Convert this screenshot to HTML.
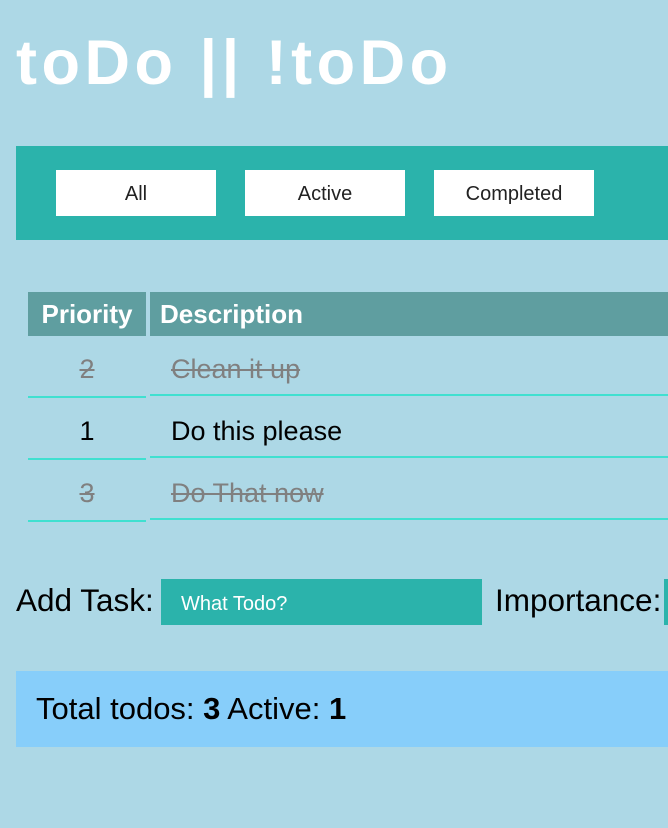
<!DOCTYPE html>
<html><head><meta charset="utf-8"><style>
html,body{margin:0;padding:0;background:#add8e6;width:668px;height:828px;overflow:hidden;font-family:"Liberation Sans",Arial,sans-serif;}
h1{position:absolute;left:16px;top:23px;margin:0;font-size:63px;font-weight:bold;color:#fff;letter-spacing:4.5px;line-height:80px;white-space:nowrap;}
.bar{position:absolute;left:16px;top:146px;width:700px;height:94px;background:#2bb3ab;}
.btn{position:absolute;top:24px;width:160px;height:46px;background:#fff;color:#222;font-size:20px;line-height:48px;text-align:center;}
.th{position:absolute;top:292px;height:44px;background:#5f9ea0;color:#fff;font-weight:bold;font-size:26px;line-height:44px;}
.cell{position:absolute;height:60px;border-bottom:2px solid #40e0d0;font-size:27px;line-height:66px;}
.done{color:#808080;text-decoration:line-through;}
.lbl{position:absolute;font-size:31.5px;top:582px;line-height:36px;color:#000;}
.inp{position:absolute;left:161px;top:579px;width:321px;height:46px;background:#2bb3ab;color:#fff;font-size:20px;line-height:50px;box-sizing:border-box;padding-left:20px;}
.foot{position:absolute;left:16px;top:671px;width:700px;height:76px;background:#87cefa;font-size:31px;line-height:76px;box-sizing:border-box;padding-left:20px;}
</style></head><body>
<h1>toDo || !toDo</h1>
<div class="bar">
<div class="btn" style="left:40px">All</div>
<div class="btn" style="left:229px">Active</div>
<div class="btn" style="left:418px">Completed</div>
</div>
<div class="th" style="left:28px;width:118px;text-align:center">Priority</div>
<div class="th" style="left:150px;width:540px;padding-left:10px;box-sizing:border-box">Description</div>

<div class="cell done" style="left:28px;top:336px;width:118px;text-align:center">2</div>
<div class="cell done" style="left:150px;top:336px;width:540px;padding-left:21px;box-sizing:border-box">Clean it up</div>
<div class="cell" style="left:28px;top:398px;width:118px;text-align:center">1</div>
<div class="cell" style="left:150px;top:398px;width:540px;padding-left:21px;box-sizing:border-box">Do this please</div>
<div class="cell done" style="left:28px;top:460px;width:118px;text-align:center">3</div>
<div class="cell done" style="left:150px;top:460px;width:540px;padding-left:21px;box-sizing:border-box">Do That now</div>

<div class="lbl" style="left:16px">Add Task:</div>
<div class="inp">What Todo?</div>
<div class="lbl" style="left:495px">Importance:</div>
<div style="position:absolute;left:664px;top:579px;width:10px;height:46px;background:#2bb3ab"></div>

<div class="foot">Total todos: <b>3</b> Active: <b>1</b></div>
</body></html>
